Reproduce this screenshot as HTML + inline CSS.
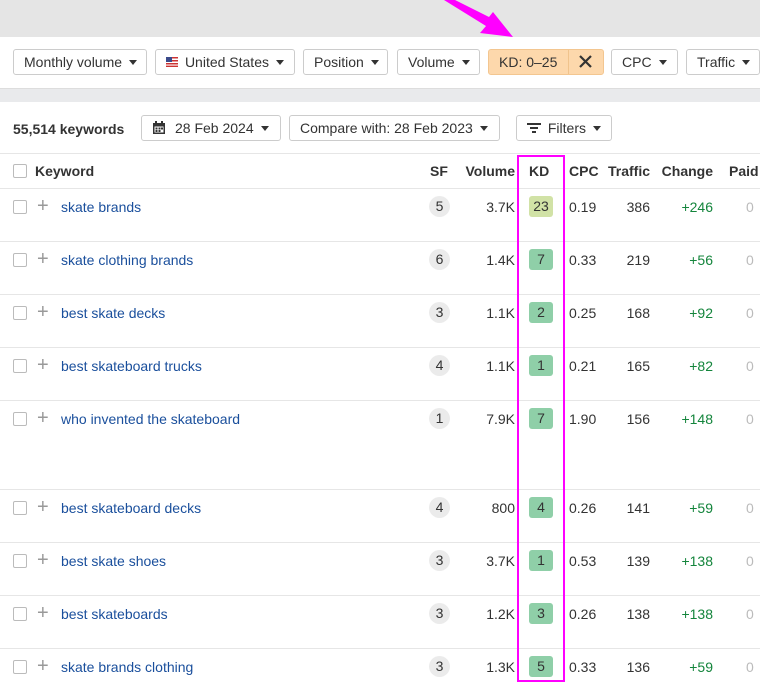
<!DOCTYPE html>
<html><head><style>
*{box-sizing:border-box;margin:0;padding:0}
body{width:760px;height:682px;overflow:hidden;background:#fff;font-family:"Liberation Sans",sans-serif;font-size:14px;color:#333;position:relative}
.top{position:absolute;left:0;top:0;width:760px;height:37px;background:#e5e5e5}
.band{position:absolute;left:0;top:88px;width:760px;height:14px;background:#e9eaec;border-top:1px solid #ddd}
.btn{position:absolute;height:26px;border:1px solid #ccc;border-radius:3px;background:#fff;display:flex;align-items:center;padding:0 10px;font-size:14px;color:#333;white-space:nowrap}
.car{display:inline-block;width:0;height:0;border-left:4px solid transparent;border-right:4px solid transparent;border-top:5px solid #333;margin-left:7px}
.abs{position:absolute;white-space:nowrap}
.line{position:absolute;left:0;width:760px;height:1px;background:#e6e6e6}
.cb{position:absolute;left:13px;width:14px;height:14px;border:1px solid #bbb;border-radius:2px;background:#fff}
.plus{position:absolute;left:37px;font-size:20px;color:#999;line-height:14px}
.kw{position:absolute;left:61px;color:#1a4f9c}
.sf{position:absolute;left:429px;width:21px;height:21px;border-radius:50%;background:#ebebeb;text-align:center;line-height:21px;font-size:14px}
.vol{position:absolute;right:245px}
.kd{position:absolute;left:529px;width:24px;height:21px;border-radius:3px;background:#8fcfa8;text-align:center;line-height:21px}
.cpc{position:absolute;left:569px}
.tr{position:absolute;right:110px}
.ch{position:absolute;right:47px;color:#14853c}
.pd{position:absolute;left:746px;color:#bbb}
</style></head><body>
<div class="top"></div>
<svg style="position:absolute;left:0;top:0" width="760" height="40"><polygon points="444,0 455,0 489,17 493,12 513,37 480,33 486,26" fill="#ff00ff"/></svg>

<div class="btn" style="left:13px;top:49px;width:134px">Monthly volume<span class="car"></span></div>
<div class="btn" style="left:155px;top:49px;width:140px"><svg width="14" height="10" style="margin-right:7px"><rect width="14" height="10" fill="#fff"/><rect y="0" width="14" height="1.5" fill="#c33"/><rect y="3" width="14" height="1.5" fill="#c33"/><rect y="6" width="14" height="1.5" fill="#c33"/><rect y="8.6" width="14" height="1.4" fill="#c33"/><rect width="6" height="5" fill="#3b4a8a"/></svg>United States<span class="car"></span></div>
<div class="btn" style="left:303px;top:49px;width:85px">Position<span class="car"></span></div>
<div class="btn" style="left:397px;top:49px;width:83px">Volume<span class="car"></span></div>
<div class="btn" style="left:488px;top:49px;width:116px;background:#fdd8ac;border-color:#f3c690;padding:0">
<span style="padding:0 10px;width:80px;border-right:1px solid #f0c38c;line-height:24px">KD: 0–25</span>
<svg width="34" height="24"><path d="M11 6 L22 17 M22 6 L11 17" stroke="#333" stroke-width="2.2"/></svg></div>
<div class="btn" style="left:611px;top:49px;width:67px">CPC<span class="car"></span></div>
<div class="btn" style="left:686px;top:49px;width:74px">Traffic<span class="car"></span></div>
<div class="band"></div>

<div class="abs" style="left:13px;top:121px;font-weight:bold">55,514 keywords</div>
<div class="btn" style="left:141px;top:115px;width:140px"><svg width="14" height="14" style="margin-right:9px"><rect x="1" y="2" width="12" height="11" fill="#333"/><rect x="3" y="0" width="2" height="3" fill="#333"/><rect x="9" y="0" width="2" height="3" fill="#333"/><rect x="2.5" y="5.5" width="9" height="6" fill="#fff"/><rect x="3.5" y="6.5" width="2" height="2" fill="#333"/><rect x="6.5" y="6.5" width="2" height="2" fill="#333"/><rect x="9" y="6.5" width="2" height="2" fill="#333"/><rect x="3.5" y="9" width="2" height="2" fill="#333"/><rect x="6.5" y="9" width="2" height="2" fill="#333"/></svg>28 Feb 2024<span class="car"></span></div>
<div class="btn" style="left:289px;top:115px;width:211px">Compare with: 28 Feb 2023<span class="car"></span></div>
<div class="btn" style="left:516px;top:115px;width:96px"><svg width="14" height="12" style="margin-right:7px"><rect x="0" y="1" width="14" height="2" fill="#333"/><rect x="3" y="5" width="8" height="2" fill="#333"/><rect x="5" y="9" width="4" height="2" fill="#333"/></svg>Filters<span class="car"></span></div>

<div class="line" style="top:153px"></div>
<div class="cb" style="top:164px"></div>
<div class="abs" style="left:35px;top:163px;font-weight:bold">Keyword</div>
<div class="abs" style="left:430px;top:163px;font-weight:bold">SF</div>
<div class="abs" style="right:245px;top:163px;font-weight:bold">Volume</div>
<div class="abs" style="left:529px;top:163px;font-weight:bold">KD</div>
<div class="abs" style="left:569px;top:163px;font-weight:bold">CPC</div>
<div class="abs" style="right:110px;top:163px;font-weight:bold">Traffic</div>
<div class="abs" style="right:47px;top:163px;font-weight:bold">Change</div>
<div class="abs" style="left:729px;top:163px;font-weight:bold">Paid</div>
<div class="line" style="top:188px"></div>

<div style="position:absolute;left:0;top:199px;width:760px">
<div class="cb" style="top:1px"></div><div class="plus">+</div><div class="kw">skate brands</div><div class="sf" style="top:-3px">5</div><div class="vol">3.7K</div><div class="kd" style="top:-3px;background:#d1e2a6">23</div><div class="cpc">0.19</div><div class="tr">386</div><div class="ch">+246</div><div class="pd">0</div></div>
<div class="line" style="top:241px"></div>
<div style="position:absolute;left:0;top:252px;width:760px">
<div class="cb" style="top:1px"></div><div class="plus">+</div><div class="kw">skate clothing brands</div><div class="sf" style="top:-3px">6</div><div class="vol">1.4K</div><div class="kd" style="top:-3px">7</div><div class="cpc">0.33</div><div class="tr">219</div><div class="ch">+56</div><div class="pd">0</div></div>
<div class="line" style="top:294px"></div>
<div style="position:absolute;left:0;top:305px;width:760px">
<div class="cb" style="top:1px"></div><div class="plus">+</div><div class="kw">best skate decks</div><div class="sf" style="top:-3px">3</div><div class="vol">1.1K</div><div class="kd" style="top:-3px">2</div><div class="cpc">0.25</div><div class="tr">168</div><div class="ch">+92</div><div class="pd">0</div></div>
<div class="line" style="top:347px"></div>
<div style="position:absolute;left:0;top:358px;width:760px">
<div class="cb" style="top:1px"></div><div class="plus">+</div><div class="kw">best skateboard trucks</div><div class="sf" style="top:-3px">4</div><div class="vol">1.1K</div><div class="kd" style="top:-3px">1</div><div class="cpc">0.21</div><div class="tr">165</div><div class="ch">+82</div><div class="pd">0</div></div>
<div class="line" style="top:400px"></div>
<div style="position:absolute;left:0;top:411px;width:760px">
<div class="cb" style="top:1px"></div><div class="plus">+</div><div class="kw">who invented the skateboard</div><div class="sf" style="top:-3px">1</div><div class="vol">7.9K</div><div class="kd" style="top:-3px">7</div><div class="cpc">1.90</div><div class="tr">156</div><div class="ch">+148</div><div class="pd">0</div></div>
<div class="line" style="top:489px"></div>
<div style="position:absolute;left:0;top:500px;width:760px">
<div class="cb" style="top:1px"></div><div class="plus">+</div><div class="kw">best skateboard decks</div><div class="sf" style="top:-3px">4</div><div class="vol">800</div><div class="kd" style="top:-3px">4</div><div class="cpc">0.26</div><div class="tr">141</div><div class="ch">+59</div><div class="pd">0</div></div>
<div class="line" style="top:542px"></div>
<div style="position:absolute;left:0;top:553px;width:760px">
<div class="cb" style="top:1px"></div><div class="plus">+</div><div class="kw">best skate shoes</div><div class="sf" style="top:-3px">3</div><div class="vol">3.7K</div><div class="kd" style="top:-3px">1</div><div class="cpc">0.53</div><div class="tr">139</div><div class="ch">+138</div><div class="pd">0</div></div>
<div class="line" style="top:595px"></div>
<div style="position:absolute;left:0;top:606px;width:760px">
<div class="cb" style="top:1px"></div><div class="plus">+</div><div class="kw">best skateboards</div><div class="sf" style="top:-3px">3</div><div class="vol">1.2K</div><div class="kd" style="top:-3px">3</div><div class="cpc">0.26</div><div class="tr">138</div><div class="ch">+138</div><div class="pd">0</div></div>
<div class="line" style="top:648px"></div>
<div style="position:absolute;left:0;top:659px;width:760px">
<div class="cb" style="top:1px"></div><div class="plus">+</div><div class="kw">skate brands clothing</div><div class="sf" style="top:-3px">3</div><div class="vol">1.3K</div><div class="kd" style="top:-3px">5</div><div class="cpc">0.33</div><div class="tr">136</div><div class="ch">+59</div><div class="pd">0</div></div>

<div style="position:absolute;left:517px;top:155px;width:48px;height:527px;border:2px solid #ff00ff"></div>
</body></html>
